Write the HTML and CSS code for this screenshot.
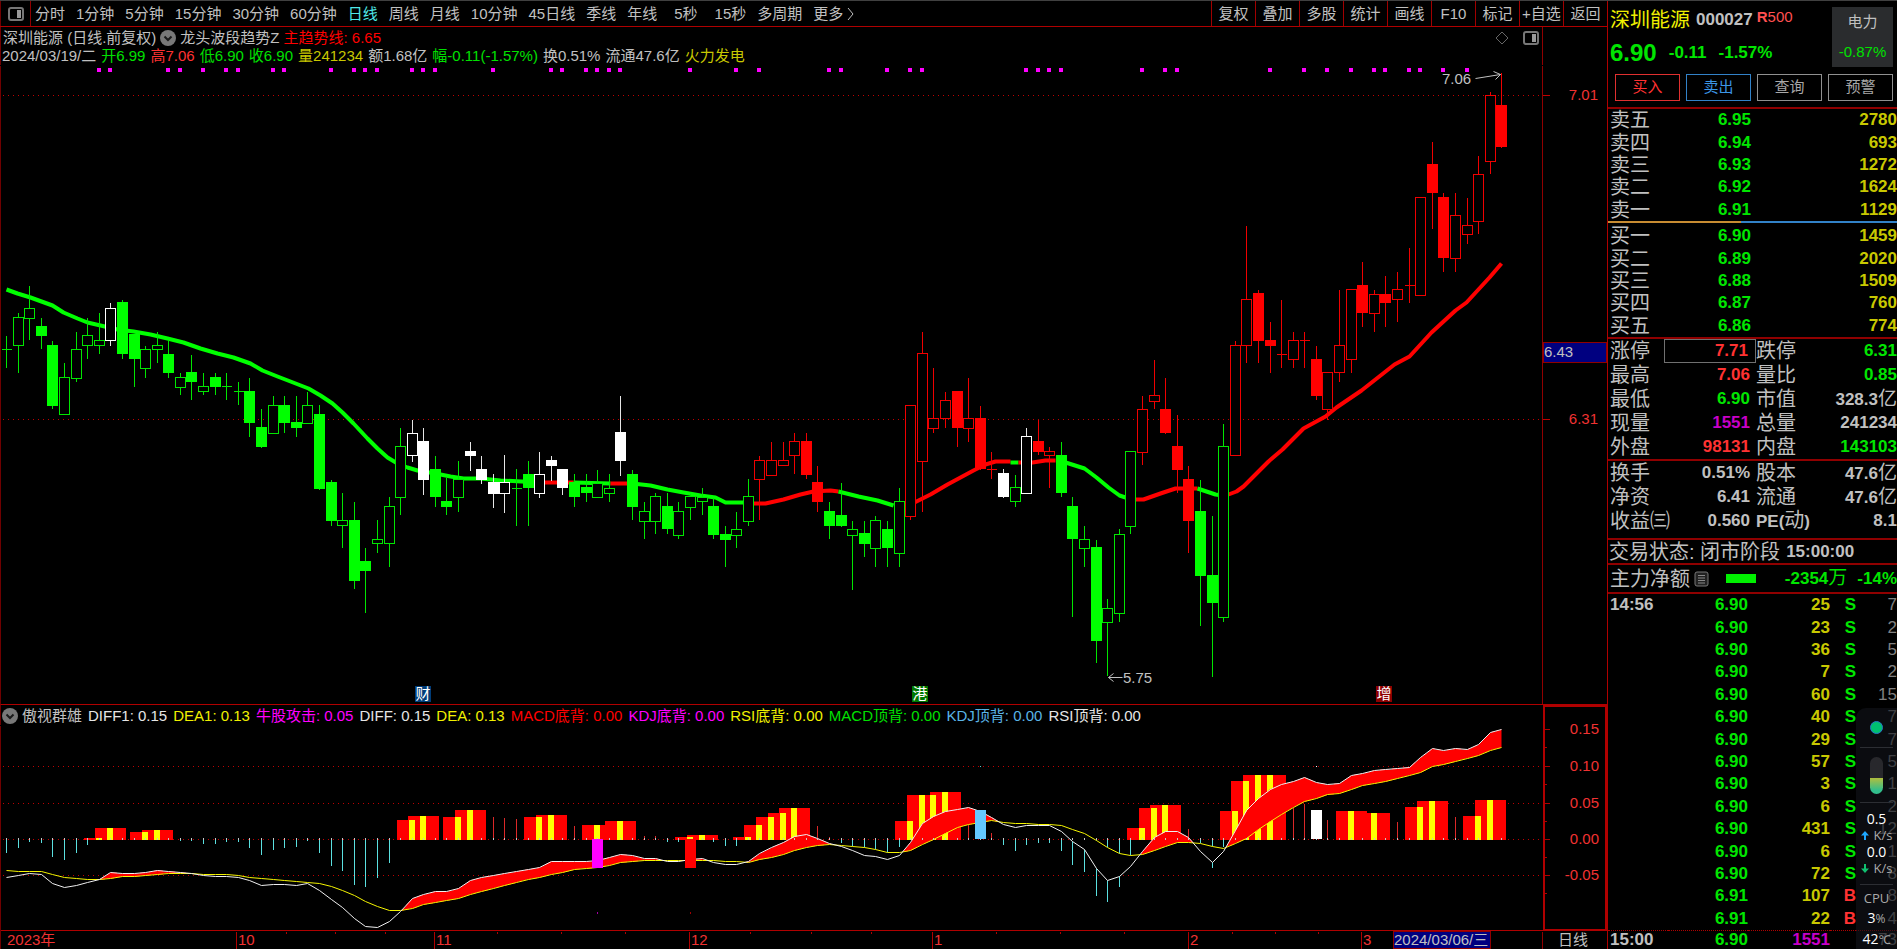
FILE: index.html
```html
<!DOCTYPE html>
<html lang="zh-CN">
<head>
<meta charset="utf-8">
<title>深圳能源 000027</title>
<link rel="stylesheet" href="styles.css">
</head>
<body>
<div class="app">
  <main class="left">
    <nav class="toolbar">
      <button class="tool-icon" aria-label="侧栏">
        <svg width="16" height="14" viewBox="0 0 16 14"><rect x="1" y="1" width="14" height="12" rx="2" fill="none" stroke="#777" stroke-width="2"/><rect x="9" y="3" width="4" height="8" fill="#999"/></svg>
      </button>
      <div class="periods">
        <button>分时</button><button>1分钟</button><button>5分钟</button><button>15分钟</button><button>30分钟</button><button>60分钟</button><button class="on">日线</button><button>周线</button><button>月线</button><button>10分钟</button><button>45日线</button><button>季线</button><button>年线</button><button class="wide">5秒</button><button>15秒</button><button>多周期</button>
        <button class="more">更多<svg width="8" height="14" viewBox="0 0 8 14"><path d="M1 1 L6 7 L1 13" fill="none" stroke="#c0c0c0"/></svg></button>
      </div>
      <div class="actions">
        <button>复权</button><button>叠加</button><button>多股</button><button>统计</button><button>画线</button><button>F10</button><button>标记</button><button>+自选</button><button>返回</button>
      </div>
    </nav>

    <header class="chart-head">
      <div class="line first">
        <span>深圳能源 (日线.前复权)</span>
        <svg class="chev" width="16" height="16" viewBox="0 0 16 16"><circle cx="8" cy="8" r="8" fill="#787878"/><path d="M4.500 6.500 L8 10 L11.500 6.500" fill="none" stroke="#1a1a1a" stroke-width="2"/></svg>
        <span>龙头波段趋势Z</span><span class="c-red trend">主趋势线: 6.65</span>
        <span class="corner">
          <svg width="14" height="14" viewBox="0 0 14 14"><path d="M7 1 L13 7 L7 13 L1 7 Z" fill="none" stroke="#666"/></svg>
          <svg width="16" height="14" viewBox="0 0 16 14"><rect x="1" y="1" width="14" height="12" rx="2" fill="none" stroke="#777" stroke-width="2"/><rect x="9" y="3" width="4" height="8" fill="#999"/></svg>
        </span>
      </div>
      <div class="line quote">
        <span>2024/03/19/二</span><span class="c-green">开6.99</span><span class="c-tone">高7.06</span><span class="c-green">低6.90</span><span class="c-green">收6.90</span><span class="c-yellow">量241234</span><span>额1.68亿</span><span class="c-green">幅-0.11(-1.57%)</span><span>换0.51%</span><span>流通47.6亿</span><span class="c-yellow">火力发电</span>
      </div>
    </header>
    <svg id="price" class="price-chart" role="img" aria-label="日K线"></svg>

    <header class="ind-head">
      <div class="line ind">
        <svg class="chev" width="16" height="16" viewBox="0 0 16 16"><circle cx="8" cy="8" r="8" fill="#787878"/><path d="M4.500 6.500 L8 10 L11.500 6.500" fill="none" stroke="#1a1a1a" stroke-width="2"/></svg>
        <span>傲视群雄</span><span class="c-white">DIFF1: 0.15</span><span class="c-lemon">DEA1: 0.13</span><span class="c-mag">牛股攻击: 0.05</span><span class="c-white">DIFF: 0.15</span><span class="c-lemon">DEA: 0.13</span><span class="c-red">MACD底背: 0.00</span><span class="c-mag">KDJ底背: 0.00</span><span class="c-lemon">RSI底背: 0.00</span><span class="c-green">MACD顶背: 0.00</span><span class="c-sky">KDJ顶背: 0.00</span><span class="c-white">RSI顶背: 0.00</span>
      </div>
      <div class="ind-axis"></div>
    </header>
    <svg id="macd" class="macd-chart" role="img" aria-label="指标"></svg>
    <svg id="time" class="time-axis" role="img" aria-label="时间轴"></svg>
  </main>

  <aside class="side">
    <section class="stock">
      <div class="stock-info">
        <h1><span class="name">深圳能源</span><span class="code">000027</span><span class="tag"><b>R</b>500</span></h1>
        <p class="last"><strong>6.90</strong><span>-0.11</span><span>-1.57%</span></p>
      </div>
      <a class="sector" href="#sector"><span>电力</span><span class="c-up">-0.87%</span></a>
      <div class="orders">
        <button class="buy">买入</button><button class="sell">卖出</button><button>查询</button><button>预警</button>
      </div>
    </section>

    <table class="book asks">
      <tr><th>卖五</th><td class="g">6.95</td><td class="y">2780</td></tr>
      <tr><th>卖四</th><td class="g">6.94</td><td class="y">693</td></tr>
      <tr><th>卖三</th><td class="g">6.93</td><td class="y">1272</td></tr>
      <tr><th>卖二</th><td class="g">6.92</td><td class="y">1624</td></tr>
      <tr><th>卖一</th><td class="g">6.91</td><td class="y">1129</td></tr>
    </table>
    <div class="ratio"></div>
    <table class="book bids">
      <tr><th>买一</th><td class="g">6.90</td><td class="y">1459</td></tr>
      <tr><th>买二</th><td class="g">6.89</td><td class="y">2020</td></tr>
      <tr><th>买三</th><td class="g">6.88</td><td class="y">1509</td></tr>
      <tr><th>买四</th><td class="g">6.87</td><td class="y">760</td></tr>
      <tr><th>买五</th><td class="g">6.86</td><td class="y">774</td></tr>
    </table>

    <section class="block">
      <table class="stats">
        <tr><th>涨停</th><td class="r boxed">7.71</td><th>跌停</th><td class="g">6.31</td></tr>
        <tr><th>最高</th><td class="r">7.06</td><th>量比</th><td class="g">0.85</td></tr>
        <tr><th>最低</th><td class="g">6.90</td><th>市值</th><td>328.3<i>亿</i></td></tr>
        <tr><th>现量</th><td class="m">1551</td><th>总量</th><td>241234</td></tr>
        <tr><th>外盘</th><td class="r">98131</td><th>内盘</th><td class="g">143103</td></tr>
      </table>
    </section>
    <section class="block second">
      <table class="stats">
        <tr><th>换手</th><td>0.51%</td><th>股本</th><td>47.6<i>亿</i></td></tr>
        <tr><th>净资</th><td>6.41</td><th>流通</th><td>47.6<i>亿</i></td></tr>
        <tr><th>收益㈢</th><td>0.560</td><th><b>PE(</b>动<b>)</b></th><td>8.1</td></tr>
      </table>
    </section>
    <section class="status"><span>交易状态: 闭市阶段</span><b>15:00:00</b></section>
    <section class="flow">
      <span>主力净额</span>
      <svg width="15" height="16" viewBox="0 0 15 16"><rect x="1" y="1" width="13" height="14" rx="2" fill="#222" stroke="#777"/><path d="M4 4.500h7M4 7h7M4 9.500h7M4 12h7" stroke="#888"/></svg>
      <i class="bar"></i>
      <b class="amount">-2354<em>万</em></b><b>-14%</b>
    </section>

    <table class="ticks">
      <tr><th>14:56</th><td class="g">6.90</td><td class="y">25</td><td class="g s">S</td><td class="n">7</td></tr>
      <tr><th></th><td class="g">6.90</td><td class="y">23</td><td class="g s">S</td><td class="n">2</td></tr>
      <tr><th></th><td class="g">6.90</td><td class="y">36</td><td class="g s">S</td><td class="n">5</td></tr>
      <tr><th></th><td class="g">6.90</td><td class="y">7</td><td class="g s">S</td><td class="n">2</td></tr>
      <tr><th></th><td class="g">6.90</td><td class="y">60</td><td class="g s">S</td><td class="n">15</td></tr>
      <tr><th></th><td class="g">6.90</td><td class="y">40</td><td class="g s">S</td><td class="n">7</td></tr>
      <tr><th></th><td class="g">6.90</td><td class="y">29</td><td class="g s">S</td><td class="n">7</td></tr>
      <tr><th></th><td class="g">6.90</td><td class="y">57</td><td class="g s">S</td><td class="n">5</td></tr>
      <tr><th></th><td class="g">6.90</td><td class="y">3</td><td class="g s">S</td><td class="n">1</td></tr>
      <tr><th></th><td class="g">6.90</td><td class="y">6</td><td class="g s">S</td><td class="n">2</td></tr>
      <tr><th></th><td class="g">6.90</td><td class="y">431</td><td class="g s">S</td><td class="n">12</td></tr>
      <tr><th></th><td class="g">6.90</td><td class="y">6</td><td class="g s">S</td><td class="n">1</td></tr>
      <tr><th></th><td class="g">6.90</td><td class="y">72</td><td class="g s">S</td><td class="n">8</td></tr>
      <tr><th></th><td class="g">6.91</td><td class="y">107</td><td class="r s">B</td><td class="n">8</td></tr>
      <tr><th></th><td class="g">6.91</td><td class="y">22</td><td class="r s">B</td><td class="n">4</td></tr>
    </table>
    <table class="ticks closing">
      <tr><th>15:00</th><td class="g">6.90</td><td class="m">1551</td><td class="s"></td><td class="n">73</td></tr>
    </table>

    <div class="widget">
      <div class="w-cell"><i class="dot"></i></div>
      <div class="w-cell"><i class="pill"></i></div>
      <div class="w-cell net">
        <b>0.5</b>
        <span><svg width="8" height="9" viewBox="0 0 8 9"><path d="M4 0 L8 4.500 H5 V9 H3 V4.500 H0 Z" fill="#1ea7ff"/></svg>K/s</span>
        <b>0.0</b>
        <span><svg width="8" height="9" viewBox="0 0 8 9"><path d="M4 9 L8 4.500 H5 V0 H3 V4.500 H0 Z" fill="#10c070"/></svg>K/s</span>
      </div>
      <div class="w-cell cpu"><span>CPU</span><b>3<small>%</small></b><b>42<small>℃</small></b></div>
    </div>
  </aside>
</div>
<script src="chart.js"></script>
</body>
</html>
```
FILE: styles.css
```css
* { box-sizing: border-box; }
body {
  margin: 0;
  background: #000;
  color: #c0c0c0;
  font: 15px/18px "Liberation Sans", "Noto Sans CJK SC", sans-serif;
}
button {
  margin: 0;
  padding: 0;
  border: 0;
  background: none;
  color: inherit;
  font: inherit;
  white-space: nowrap;
}
i, em { font-style: normal; }
.app {
  display: grid;
  grid-template-columns: 1fr 290px;
  height: 100vh;
  min-height: 700px;
  overflow: hidden;
  border-top: 1px solid #404040;
}
.left { display: flex; flex-direction: column; min-width: 0; }

.toolbar {
  display: flex;
  height: 26px;
  border-bottom: 1px solid #b00000;
}
.tool-icon {
  width: 31px;
  border-left: 1px solid #700000;
  border-right: 1px solid #900000;
  display: grid;
  place-items: center;
}
.periods { display: flex; flex: 1; gap: 11px; padding-left: 4px; }
.periods .on { color: #50e8e8; }
.periods .wide { padding: 0 6px; }
.more { display: flex; align-items: center; gap: 4px; }
.actions { display: flex; }
.actions button { width: 44px; border-left: 1px solid #a00000; }

.c-red { color: #f00; }
.c-tone { color: #ff3232; }
.c-green { color: #00e000; }
.c-yellow { color: #c8c800; }
.c-lemon { color: #f0f000; }
.c-mag { color: #f0f; }
.c-sky { color: #5ab4e6; }
.c-white { color: #e6e6e6; }
.c-up { color: #00e000; }

.line { display: flex; align-items: center; height: 18px; white-space: nowrap; }
.chev { flex: none; }
.chart-head {
  margin-right: 64px;
  height: 38px;
  padding-top: 2px;
  border-left: 1px solid #700000;
  border-right: 1px solid #900000;
}
.first { gap: 4px; padding-left: 2px; }
.corner { display: flex; gap: 14px; margin-left: auto; padding-right: 3px; }
.quote { gap: 5px; padding-left: 1px; }
.price-chart { display: block; width: 100%; flex: 1 1 0; min-height: 0; }
.ind-head {
  display: grid;
  grid-template-columns: 1fr 64px;
  flex: none;
  height: 21px;
  border-top: 1px solid #b00000;
  border-left: 1px solid #700000;
}
.ind { gap: 6px; padding: 1px 0 0 1px; height: 20px; }
.ind .chev { margin-right: -2px; }
.ind-axis { border: 2px solid #b00000; border-bottom: 0; }
.macd-chart { display: block; width: 100%; height: 206px; flex: none; overflow: visible; }
.time-axis { display: block; width: 100%; height: 18px; flex: none; }
svg text { font-size: 15px; }

.side {
  position: relative;
  border-left: 1px solid #b00000;
  overflow: hidden;
}
.stock {
  display: grid;
  grid-template-columns: 1fr 61px;
  padding: 6px 4px 6px 2px;
  height: 108px;
  border-bottom: 2px solid #900000;
}
h1 { display: flex; align-items: center; margin: 0; height: 26px; font-size: 17px; white-space: nowrap; }
.name { color: #f0f000; font-size: 20px; font-weight: 400; margin-right: 6px; }
.tag { color: #ff5050; font-size: 15px; font-weight: 400; margin: -6px 0 0 4px; }
.last {
  display: flex;
  align-items: center;
  gap: 12px;
  height: 40px;
  margin: 0;
  color: #00e600;
  font-size: 17px;
  font-weight: 700;
}
.last strong { font-size: 24px; }
.sector {
  display: flex;
  flex-direction: column;
  justify-content: space-around;
  align-items: center;
  height: 60px;
  background: #2a2c2e;
  color: #c0c0c0;
  text-decoration: none;
}
.orders { grid-column: 1 / 3; display: flex; gap: 6px; padding: 0 0 0 5px; height: 27px; }
.orders button { flex: 1; border: 1px solid #909090; color: #a8a8a8; }
.orders .buy { border-color: #e03030; color: #ff3232; }
.orders .sell { border-color: #3282c8; color: #3c96e6; }

table { border-collapse: collapse; width: 100%; table-layout: fixed; }
th, td { padding: 0; line-height: 20px; white-space: nowrap; }
th { font-size: 20px; font-weight: 400; text-align: left; }
td { font-size: 17px; font-weight: 700; text-align: right; }
td i { font-size: 19px; font-weight: 400; }
.g { color: #00e600; }
.y { color: #c8c800; }
.r { color: #ff3232; }
.m { color: #c800c8; }
.book { height: 112px; }
.book th { width: 60px; padding-left: 2px; }
.book td:nth-child(2) { width: 83px; }
.ratio { height: 2px; background: linear-gradient(90deg, #c88c32 46%, #3282c8 46%); }
.bids { margin-top: 2px; }
.block { border-top: 2px solid #900000; padding-left: 2px; }
.second { padding-bottom: 5px; }
.stats tr { height: 24px; }
.stats th:nth-child(1) { width: 54px; }
.stats td:nth-child(2) { width: 92px; padding-right: 6px; }
.stats th:nth-child(3) { width: 50px; }
.stats td.boxed { outline: 1px solid #707070; outline-offset: -1px; padding-right: 8px; }
.stats b { font-size: 17px; }
.status, .flow {
  display: flex;
  align-items: center;
  gap: 6px;
  padding-left: 1px;
  border-top: 2px solid #900000;
  font-size: 20px;
  white-space: nowrap;
}
.status { height: 25px; line-height: 22px; }
.status b, .flow b { font-size: 17px; }
.flow { height: 29px; padding-left: 2px; gap: 4px; line-height: 24px; }
.flow b { color: #00e600; }
.flow em { font-size: 19px; font-weight: 400; }
.bar { width: 30px; height: 9px; margin-left: 13px; background: #00f000; }
.amount { margin-left: auto; margin-right: 6px; }
.ticks { height: 338px; border-top: 2px solid #900000; }
.ticks th { width: 60px; padding-left: 2px; font-size: 17px; font-weight: 700; }
.ticks td:nth-child(2) { width: 80px; }
.ticks td:nth-child(3) { width: 82px; }
.ticks .s { width: 26px; }
.ticks .n { color: #808080; font-weight: 400; }
.closing { height: 19px; border-top: 1px dotted #b00000; }
.closing th, .closing td { line-height: 18px; }

.widget {
  position: absolute;
  right: 0;
  bottom: 0;
  width: 41px;
  height: 241px;
  padding: 0 4px;
  border-radius: 10px 0 0 0;
  background: rgba(18, 20, 26, .6);
  color: #aaa;
  font: 13px/15px "Open Sans", "Noto Sans", sans-serif;
  overflow: hidden;
}
.w-cell { display: grid; place-items: center; height: 40px; border-bottom: 1px solid #2c2e33; }
.w-cell:nth-child(2) { height: 55px; }
.dot { width: 13px; height: 13px; border-radius: 50%; background: #00c070; border: 1px solid #2878c8; }
.pill { width: 13px; height: 37px; border-radius: 7px; background: linear-gradient(#28282c 56%, #b4be3c 56%, #32be8c 90%); }
.w-cell b { color: #fff; font-weight: 400; font-size: 14px; }
.w-cell small { color: #aaa; font-size: 12px; }
.w-cell span { display: flex; align-items: center; gap: 5px; }
.w-cell.net { height: 82px; padding: 7px 0; }
.w-cell.cpu { height: 64px; padding-top: 4px; border: 0; white-space: nowrap; }
```
FILE: chart.js
```js
const AXIS = 64;      // width of the value axis
const PLOT_W = 1543;  // design width of the plot area
const G = '#00ff00', R = '#ff0000', W = '#ffffff';

// kind + high, body top, body bottom, low. Upper case is a filled body, lower case a hollow one.
const CANDLES = `g335,349,349,367 g312,317,345,372 g285,308,318,339 G317,326,336,348 G340,345,406,408 g362,377,414,414
g331,349,378,381 g317,335,345,358 g312,340,345,353 w302,308,340,345 G299,302,354,358 G334,334,359,386 g345,349,368,377
g331,345,349,362 G339,354,373,377 g372,377,387,394 G354,372,382,399 g372,386,391,394 G372,377,387,394 g372,386,386,399
g381,391,391,404 G377,391,423,436 G408,427,447,447 g395,405,433,433 G395,405,423,432 G395,422,428,436 g391,405,423,423
G404,414,489,489 G479,482,521,525 g492,520,525,547 G501,520,581,588 G547,561,571,612 g519,539,543,552 g496,506,543,566
g427,446,497,514 w419,433,455,461 W427,441,480,494 G455,469,497,506 G477,501,507,514 g460,479,497,511 W441,451,456,470
W455,469,480,483 W473,482,494,507 w454,482,493,512 g468,488,488,525 G460,474,488,525 w451,474,493,497 W455,460,466,480
W469,469,488,494 G473,482,497,506 G473,487,493,501 g469,483,497,497 g473,488,493,501 W395,432,461,475 G469,474,507,519
g501,511,521,538 g492,496,521,533 G492,506,529,533 g501,511,535,538 g493,496,507,519 g487,497,501,514 G497,506,535,538
G525,534,540,566 g511,529,535,547 g478,496,521,525 r455,460,479,519 r441,460,475,475 r441,460,465,465 r432,441,455,473
R432,441,475,478 R465,482,502,511 G501,511,526,538 G482,515,526,526 g520,529,535,589 G520,533,544,556 g515,520,548,566
G520,529,548,566 g487,501,553,566 r405,405,516,519 r331,353,461,511 r367,418,428,432 r391,400,418,427 R391,391,428,446
r377,418,428,441 R405,418,469,469 r451,469,469,478 W468,473,497,497 g474,487,501,506 w427,436,493,493 R419,441,452,454
r446,451,455,487 G441,455,493,496 G496,506,539,616 g525,539,548,566 G539,547,641,662 g598,608,622,675 g528,534,613,621
g451,451,526,533 r395,409,452,464 r359,395,401,408 R377,409,433,433 R414,446,470,492 R465,479,521,552 G479,511,576,625
G515,575,603,676 g423,446,617,621 r340,345,455,455 r225,299,345,362 R289,293,341,362 R321,340,346,372 r299,354,354,367
r331,340,359,367 r331,340,340,367 R345,359,396,399 r372,372,409,419 r289,345,372,381 r289,289,359,372 R261,285,313,326
r289,294,313,331 R275,294,303,326 r271,289,299,321 r247,285,285,302 r197,197,295,295 R141,164,193,228 R192,197,258,271
r192,215,258,271 r197,225,234,243 r155,174,221,233 r91,95,161,173 R72,105,147,147`
  .split(/\s+/).map(s => [s[0], ...s.slice(1).split(',').map(Number)]);

const TREND = [
  [G, '6,289 17,293 30,297 52,305 63,312 77,318 87,322 100,325 117,329 133,331 150,334 167,338 183,342 200,348 217,353 233,357 250,363 262,370 277,376 290,381 308,388 320,395 332,403 342,412 353,423 367,438 377,448 387,457 397,463 407,467 417,470 435,473 450,476 463,478 480,478 500,480 521,481 544,482'],
  [R, '544,482 573,482'], [G, '573,482 610,483'], [R, '610,483 632,483'],
  [G, '632,483 650,485 667,489 683,492 700,495 715,497 725,502 743,502'],
  [R, '748,503 765,503 783,499 800,494 813,491 830,490 838,491'],
  [G, '838,491 858,496 877,500 893,505'],
  [R, '914,502 930,494 947,484 960,477 973,470 985,464 995,461 1010,461'],
  [G, '1010,462 1018,462'],
  [R, '1018,462 1032,462 1045,460 1055,460'],
  [G, '1062,461 1084,468 1096,477 1108,487 1119,495 1125,497'],
  [R, '1135,499 1143,499 1160,493 1175,488 1197,488'],
  [G, '1197,488 1215,494 1222,495'],
  [R, '1228,494 1236,491 1243,486 1268,461 1282,449 1303,428 1314,422 1325,416 1336,407 1361,390 1394,364 1409,356 1431,332 1455,310 1466,302 1489,277 1501,263'],
];
const DOTS = [8,9,14,15,17,19,20,23,24,28,30,31,32,35,36,37,42,47,48,50,51,52,53,59,63,65,71,72,76,78,79,88,89,90,91,98,100,101,109,112,114,116,118,119,121,122,124,126];

const DIFF = [877,875,873,874,883,887,885,882,879,872,873,873,872,870,871,872,873,875,876,876,877,880,885,884,884,885,883,890,899,907,918,926,927,921,911,898,894,891,891,888,880,877,875,873,871,869,867,861,861,861,861,860,857,854,855,858,858,861,861,859,858,862,864,864,861,853,847,842,836,834,838,843,846,850,855,856,859,855,842,823,816,811,809,807,811,817,824,827,825,825,825,831,841,849,868,880,876,866,851,837,831,831,837,851,862,851,830,810,798,789,784,781,777,782,784,783,775,773,770,769,768,767,757,748,750,748,749,744,732,729];
const DEA = [870,871,871,871,874,877,878,879,879,878,876,876,875,874,873,873,873,874,874,874,875,877,878,879,880,881,882,883,886,890,895,901,906,910,910,908,904,902,900,898,894,891,888,885,882,879,877,874,872,869,868,867,865,862,861,860,860,860,860,860,860,860,861,861,862,859,857,854,850,847,845,844,845,846,847,849,852,852,850,844,839,833,827,824,822,820,822,823,823,824,824,825,829,833,840,847,853,855,854,850,846,842,842,843,846,848,843,838,829,821,814,807,801,798,794,793,789,785,783,781,778,775,772,766,764,761,758,755,750,747];
const FALL = {0:852,1:847,2:841,3:842,4:856,5:859,6:852,7:844,15:840,16:840,17:843,18:843,19:841,20:841,21:847,22:854,23:849,24:847,25:846,26:840,27:852,28:865,29:870,30:884,31:886,32:877,33:862,57:841,58:841,61:841,62:845,63:845,72:842,73:847,74:847,75:849,76:852,77:846,86:844,87:850,88:844,89:842,90:842,91:850,92:864,93:871,94:895,95:901,96:886,97:856,103:842,104:867,105:846};
const RISE = {42:816,43:817,44:818,49:825,55:835,56:835,70:825,71:836,83:823,85:832,102:828,111:807,112:803,114:819,120:821,125:816};
const BLOCKS = {8:838,9:828,12:832,13:830,35:820,36:816,39:817,40:810,46:817,47:815,51:825,53:821,59:837,60:835,64:837,65:825,66:817,67:813,68:808,78:821,79:795,80:795,81:792,98:828,99:808,100:805,106:811,107:781,108:775,109:775,116:811,118:813,122:807,123:801,127:816,128:800};

const ix = i => Math.round(6 + i * 11.592);

// Maps design coordinates to the current size of one svg; the value axis keeps its width.
function scaler(svg, top, height) {
  const box = svg.getBoundingClientRect();
  const plot = box.width - AXIS;
  const out = [];
  return {
    X: v => Math.round(v <= PLOT_W ? v * plot / PLOT_W : plot + v - PLOT_W),
    Y: v => Math.round((v - top) * box.height / height),
    rect(x, y, w, h, fill, stroke) {
      const o = stroke ? 0.5 : 0;
      out.push(`<rect x="${this.X(x) + o}" y="${this.Y(y) + o}" width="${w}" height="${this.Y(y + h) - this.Y(y)}" fill="${fill}"${stroke ? ` stroke="${stroke}"` : ''}/>`);
    },
    line(x1, y1, x2, y2, color, width = 1, dash = '') {
      const o = width % 2 ? 0.5 : 0;
      out.push(`<path d="M${this.X(x1) + o} ${this.Y(y1) + o}L${this.X(x2) + o} ${this.Y(y2) + o}" stroke="${color}" stroke-width="${width}" stroke-dasharray="${dash}" fill="none" shape-rendering="crispEdges"/>`);
    },
    poly(points, stroke, fill = 'none', width = 1) {
      out.push(`<path d="M${points.map(([x, y]) => `${this.X(x) + 0.5} ${this.Y(y) + 0.5}`).join('L')}" stroke="${stroke}" stroke-width="${width}" fill="${fill}" stroke-linejoin="round"/>`);
    },
    text(x, y, s, color, anchor = 'start') {
      out.push(`<text x="${this.X(x)}" y="${this.Y(y)}" dy="5" fill="${color}" text-anchor="${anchor}">${s}</text>`);
    },
    flush() { svg.innerHTML = out.join(''); },
  };
}

const pairs = s => s.split(' ').map(p => p.split(',').map(Number));

function drawPrice() {
  const c = scaler(document.getElementById('price'), 65, 639);
  c.line(0, 65, 0, 704, '#700000');
  c.line(1542, 65, 1542, 704, '#900000');
  for (const y of [95, 419]) {
    c.line(2, y, 1542, y, '#c00000', 1, '1 4');
    c.line(1542, y, 1549, y, '#c00000');
  }
  c.text(1598, 95, '7.01', '#f03232', 'end');
  c.text(1598, 419, '6.31', '#f03232', 'end');
  DOTS.forEach(i => c.rect(ix(i) - 2, 68, 4, 4, '#ff00ff'));
  TREND.forEach(([color, pts]) => c.poly(pairs(pts), color, 'none', 4));
  CANDLES.forEach(([kind, high, top, bottom, low], i) => {
    const x = ix(i), k = kind.toLowerCase();
    const thin = { g: '#00e600', r: '#f00000', w: '#e6e6e6' }[k];
    const full = { g: G, r: R, w: W }[k];
    c.line(x, high, x, low, thin);
    if (top === bottom) c.line(x - 5, top, x + 5, top, thin);
    else if (kind === k) c.rect(x - 5, top, 10, bottom - top, '#000', k === 'w' ? W : thin);
    else c.rect(x - 5, top, 11, bottom - top, full);
  });
  c.text(1442, 79, '7.06', '#c0c0c0');
  c.poly([[1475, 78], [1500, 74], [1493, 71]], '#c0c0c0');
  c.poly([[1500, 74], [1495, 79]], '#c0c0c0');
  c.text(1123, 678, '5.75', '#c0c0c0');
  c.poly([[1122, 677], [1108, 677], [1113, 673]], '#c0c0c0');
  c.poly([[1108, 677], [1113, 681]], '#c0c0c0');
  [[415, '财', '#003c78'], [912, '港', '#007800'], [1376, '增', '#8c0000']].forEach(([x, s, bg]) => {
    c.rect(x, 686, 16, 16, bg);
    c.text(x + 8, 694, s, '#fff', 'middle');
  });
  c.rect(1543, 342, 63, 20, '#000080', '#900000');
  c.text(1544, 352, '6.43', '#c0c0c0');
  c.flush();
}

function drawMacd() {
  const c = scaler(document.getElementById('macd'), 725, 206);
  c.line(0, 725, 0, 931, '#700000');
  [766, 803, 839, 875].forEach(y => c.line(2, y, 1542, y, '#c00000', 1, '1 4'));
  for (const i in BLOCKS) c.rect(ix(i) - 15, BLOCKS[i], 31, 840 - BLOCKS[i], R);
  for (const i in BLOCKS) c.rect(ix(i) - 3, BLOCKS[i], 6, 840 - BLOCKS[i], '#ffff00');
  for (const i in RISE) c.line(ix(i), RISE[i], ix(i), 839, '#dc2828');
  for (const i in FALL) c.line(ix(i), 839, ix(i), FALL[i], '#5ae0e0');
  const up = [], down = [], base = [];
  for (let x = 6; x <= 1501; x++) {
    const t = Math.min((x - 6) / 11.592, 128.999), i = Math.floor(t), f = t - i;
    const d = DIFF[i] + (DIFF[i + 1] - DIFF[i]) * f, e = DEA[i] + (DEA[i + 1] - DEA[i]) * f;
    up.push([x, Math.min(d, e)]);
    down.push([x, Math.max(d, e)]);
    base.unshift([x, e]);
  }
  c.poly([...down, ...base], 'none', '#000');
  c.poly([...up, ...base], 'none', R);
  c.poly(DEA.map((y, i) => [ix(i), y]), '#f5f500');
  c.poly(DIFF.map((y, i) => [ix(i), y]), '#f0f0f0');
  DIFF.forEach((_, i) => c.rect(ix(i), 838, 1, 2, '#c8c8c8'));
  c.rect(592, 839, 11, 29, '#ff00ff');
  c.rect(685, 839, 11, 29, R);
  c.rect(975, 810, 11, 29, '#64c8ff');
  c.rect(1311, 810, 11, 29, W);
  c.rect(597, 912, 1, 2, '#a000a0');
  c.rect(690, 912, 1, 2, '#a00000');
  c.rect(980, 766, 1, 1, '#50c8c8');
  c.rect(1316, 766, 1, 1, W);
  c.rect(1543, 725, 2, 206, '#b00000');
  c.rect(1605, 725, 2, 206, '#b00000');
  [[729, '0.15'], [766, '0.10'], [803, '0.05'], [839, '0.00'], [875, '-0.05']].forEach(([y, s]) => {
    c.line(1543, y, 1549, y, '#b00000');
    c.line(1543, y + 18, 1546, y + 18, '#b00000');
    c.text(1599, y, s, '#f03232', 'end');
  });
  c.line(0, 930, 1543, 930, '#b00000');
  c.rect(1543, 929, 64, 2, '#b00000');
  c.flush();
}

function drawTime() {
  const c = scaler(document.getElementById('time'), 931, 18);
  c.line(0, 931, 0, 949, '#700000');
  c.text(7, 940, '2023年', '#f03232');
  [[236, '10'], [434, '11'], [689, '12'], [932, '1'], [1188, '2'], [1361, '3']].forEach(([x, s]) => {
    c.line(x, 931, x, 949, '#b00000');
    c.text(x + 2, 940, s, '#f03232');
  });
  [286, 335, 385, 497, 561, 625, 750, 811, 871, 996, 1060, 1124, 1232, 1275, 1318].forEach(x => c.line(x, 931, x, 933, '#b00000'));
  c.rect(1393, 931, 97, 17, '#000080', '#900000');
  c.text(1394, 940, '2024/03/06/三', '#c0c0c0');
  c.line(1542, 931, 1542, 949, '#900000');
  c.text(1573, 940, '日线', '#c0c0c0', 'middle');
  c.flush();
}

function draw() { drawPrice(); drawMacd(); drawTime(); }
draw();
window.addEventListener('resize', draw);
```
